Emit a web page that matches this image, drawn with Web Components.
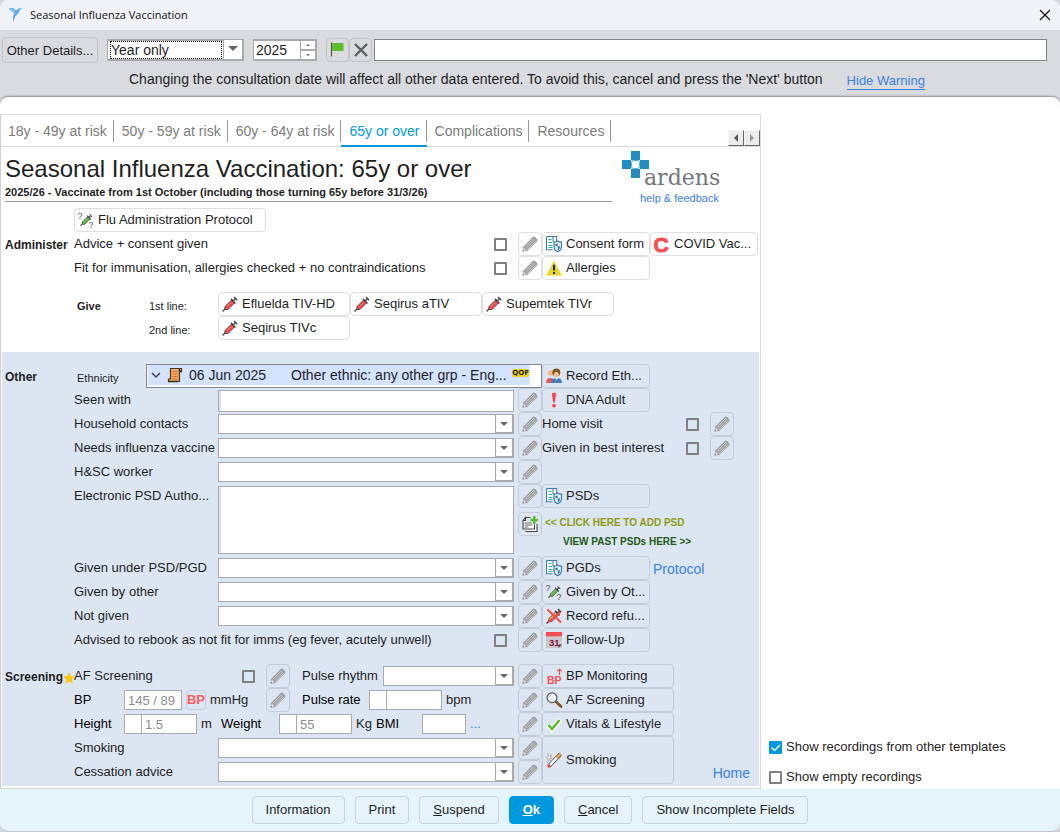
<!DOCTYPE html>
<html lang="en">
<head>
<meta charset="utf-8">
<title>Seasonal Influenza Vaccination</title>
<style>
  html { background: #d4d6da; }
  body {
    margin: 0; min-height: 100vh; display: flex; flex-direction: column;
    font: 13px/16px "Liberation Sans", Arial, sans-serif; color: #1e1e1e;
    --line: #dedfe2; --accent: #0099e0; --link: #3a82dc;
  }
  a { color: var(--link); text-decoration: none; }
  h2 { margin: 0; font-size: 12px; line-height: 27px; }
  h3 { margin: 0; font-size: 11px; line-height: 24px; padding-top: 3px; }
  .small { font-size: 11px; line-height: 24px; padding-top: 3px; }
  .strong { color: #000; }
  .pair { display: grid; grid-template-columns: 72px 1fr; padding-left: 3px; box-sizing: border-box; }
  .grow { flex: 1; }
  .w20 { width: 20px; }
  .w48 { width: 48px; }
  .w50 { width: 50px; }
  .w58 { width: 58px; }
  .w67 { width: 67px; }
  .w72 { width: 72px; }
  .w81 { width: 81px; }
  .w144 { width: 144px; }
  .w168 { width: 168px; }
  .note { font-size: 10px; font-weight: bold; line-height: 19px; }
  .add { color: #8f9a10; padding-left: 3px; margin-top: 5px; }
  .past { color: #1e5a14; padding-left: 21px; }
  .big { font-size: 14px; padding-left: 3px; line-height: 24px; padding-top: 2px; }
  .home { font-size: 14px; align-self: flex-end; margin-left: auto; padding-right: 9px; line-height: 22px; }
  .starred { display: flex; align-items: center; }
</style>
</head>
<body>
<title-bar>Seasonal Influenza Vaccination</title-bar>
<date-bar>Changing the consultation date will affect all other data entered. To avoid this, cancel and press the 'Next' button</date-bar>

<work-area>
  <template-panel>
    <tab-strip slot="tabs" labels="18y - 49y at risk|50y - 59y at risk|60y - 64y at risk|65y or over|Complications|Resources" current="3"></tab-strip>
    <template-header heading="Seasonal Influenza Vaccination: 65y or over">2025/26 - Vaccinate from 1st October (including those turning 65y before 31/3/26)</template-header>

    <form-section>
      <form-row>
        <action-button slot="wide" icon="protocol" size="large">Flu Administration Protocol</action-button>
      </form-row>
      <form-row>
        <h2 slot="heading">Administer</h2>
        <label slot="line" class="grow" for="advice">Advice + consent given</label>
        <tick-box slot="line" id="advice" label="Advice + consent given" spaced></tick-box>
        <edit-button slot="edit"></edit-button>
        <action-button slot="actions" icon="form">Consent form</action-button>
        <action-button slot="actions" icon="covid">COVID Vac...</action-button>
      </form-row>
      <form-row>
        <label slot="line" class="grow" for="fit">Fit for immunisation, allergies checked + no contraindications</label>
        <tick-box slot="line" id="fit" label="Fit for immunisation" spaced></tick-box>
        <edit-button slot="edit"></edit-button>
        <action-button slot="actions" icon="warning">Allergies</action-button>
      </form-row>
      <form-row gap>
        <div slot="wide" class="pair w144"><h3>Give</h3><span class="small">1st line:</span></div>
        <action-button slot="wide" icon="syringe" size="medium">Efluelda TIV-HD</action-button>
        <action-button slot="wide" icon="syringe" size="medium">Seqirus aTIV</action-button>
        <action-button slot="wide" icon="syringe" size="medium">Supemtek TIVr</action-button>
      </form-row>
      <form-row>
        <div slot="wide" class="pair w144"><span></span><span class="small">2nd line:</span></div>
        <action-button slot="wide" icon="syringe" size="medium">Seqirus TIVc</action-button>
      </form-row>
    </form-section>

    <form-section tinted>
      <form-row>
        <h2 slot="heading">Other</h2>
        <div slot="line" class="pair small"><span>Ethnicity</span></div>
        <record-line slot="record" date="06 Jun 2025">Other ethnic: any other grp - Eng...</record-line>
        <action-button slot="actions" icon="people">Record Eth...</action-button>
      </form-row>
      <form-row>
        <label slot="line" class="w144" for="seen">Seen with</label>
        <text-box slot="line" id="seen" label="Seen with" wide></text-box>
        <edit-button slot="edit"></edit-button>
        <action-button slot="actions" icon="alert">DNA Adult</action-button>
      </form-row>
      <form-row>
        <label slot="line" class="w144" for="contacts">Household contacts</label>
        <combo-box slot="line" id="contacts" label="Household contacts"></combo-box>
        <edit-button slot="edit"></edit-button>
        <label slot="actions" class="w144" for="visit">Home visit</label>
        <tick-box slot="actions" id="visit" label="Home visit" spaced></tick-box>
        <edit-button slot="actions"></edit-button>
      </form-row>
      <form-row>
        <label slot="line" class="w144" for="needs">Needs influenza vaccine</label>
        <combo-box slot="line" id="needs" label="Needs influenza vaccine"></combo-box>
        <edit-button slot="edit"></edit-button>
        <label slot="actions" class="w144" for="interest">Given in best interest</label>
        <tick-box slot="actions" id="interest" label="Given in best interest" spaced></tick-box>
        <edit-button slot="actions"></edit-button>
      </form-row>
      <form-row>
        <label slot="line" class="w144" for="worker">H&amp;SC worker</label>
        <combo-box slot="line" id="worker" label="H&amp;SC worker"></combo-box>
        <edit-button slot="edit"></edit-button>
      </form-row>
      <form-row tall>
        <label slot="line" class="w144" for="psd">Electronic PSD Autho...</label>
        <memo-box slot="line" id="psd" label="Electronic PSD Authorisation"></memo-box>
        <edit-button slot="edit"></edit-button>
        <edit-button slot="edit" icon="addnote" label="Add note"></edit-button>
        <action-button slot="actions" icon="form">PSDs</action-button>
        <span slot="actions" class="note add">&lt;&lt; CLICK HERE TO ADD PSD</span>
        <span slot="actions" class="note past">VIEW PAST PSDs HERE &gt;&gt;</span>
      </form-row>
      <form-row>
        <label slot="line" class="w144" for="under">Given under PSD/PGD</label>
        <combo-box slot="line" id="under" label="Given under PSD/PGD"></combo-box>
        <edit-button slot="edit"></edit-button>
        <action-button slot="actions" icon="form">PGDs</action-button>
        <a slot="actions" class="big" href="#protocol">Protocol</a>
      </form-row>
      <form-row>
        <label slot="line" class="w144" for="byother">Given by other</label>
        <combo-box slot="line" id="byother" label="Given by other"></combo-box>
        <edit-button slot="edit"></edit-button>
        <action-button slot="actions" icon="protocol">Given by Ot...</action-button>
      </form-row>
      <form-row>
        <label slot="line" class="w144" for="notgiven">Not given</label>
        <combo-box slot="line" id="notgiven" label="Not given"></combo-box>
        <edit-button slot="edit"></edit-button>
        <action-button slot="actions" icon="refused">Record refu...</action-button>
      </form-row>
      <form-row>
        <label slot="line" class="grow" for="rebook">Advised to rebook as not fit for imms (eg fever, acutely unwell)</label>
        <tick-box slot="line" id="rebook" label="Advised to rebook" spaced></tick-box>
        <edit-button slot="edit"></edit-button>
        <action-button slot="actions" icon="calendar">Follow-Up</action-button>
      </form-row>

      <form-row gap>
        <h2 slot="heading" class="starred">Screening<ui-icon name="star"></ui-icon></h2>
        <label slot="line" class="w168" for="af">AF Screening</label>
        <tick-box slot="line" id="af" label="AF Screening" spaced></tick-box>
        <edit-button slot="line" spaced></edit-button>
        <label slot="line" class="w81" for="rhythm">Pulse rhythm</label>
        <combo-box slot="line" id="rhythm" label="Pulse rhythm"></combo-box>
        <edit-button slot="edit"></edit-button>
        <action-button slot="actions" icon="bp" size="medium">BP Monitoring</action-button>
      </form-row>
      <form-row>
        <label slot="line" class="w50 strong" for="bp">BP</label>
        <text-box slot="line" id="bp" label="BP" value="145 / 89"></text-box>
        <bp-button slot="line"></bp-button>
        <span slot="line" class="grow">mmHg</span>
        <edit-button slot="line" spaced></edit-button>
        <label slot="line" class="w67 strong" for="rate">Pulse rate</label>
        <split-box slot="line" id="rate" label="Pulse rate"></split-box>
        <span slot="line" class="w72">bpm</span>
        <edit-button slot="edit"></edit-button>
        <action-button slot="actions" icon="search" size="medium">AF Screening</action-button>
      </form-row>
      <form-row>
        <label slot="line" class="w50 strong" for="height">Height</label>
        <split-box slot="line" id="height" label="Height" value="1.5"></split-box>
        <span slot="line" class="w20">m</span>
        <label slot="line" class="w58 strong" for="weight">Weight</label>
        <split-box slot="line" id="weight" label="Weight" value="55"></split-box>
        <span slot="line" class="w20">Kg</span>
        <label slot="line" class="grow strong" for="bmi">BMI</label>
        <text-box slot="line" id="bmi" label="BMI" narrow></text-box>
        <a slot="line" class="w48" href="#bmi">...</a>
        <edit-button slot="edit"></edit-button>
        <action-button slot="actions" icon="tick" size="medium">Vitals &amp; Lifestyle</action-button>
      </form-row>
      <form-row double>
        <label slot="line" class="w144" for="smoking">Smoking</label>
        <combo-box slot="line" id="smoking" label="Smoking"></combo-box>
        <label slot="line" class="w144" for="cessation">Cessation advice</label>
        <combo-box slot="line" id="cessation" label="Cessation advice"></combo-box>
        <edit-button slot="edit"></edit-button>
        <edit-button slot="edit"></edit-button>
        <action-button slot="actions" icon="cigarette" size="medium">Smoking</action-button>
        <a slot="actions" class="home" href="#home">Home</a>
      </form-row>
    </form-section>
  </template-panel>

  <display-options slot="side"></display-options>
</work-area>

<footer-bar></footer-bar>

<script>
const define = (name, markup, setup, field) => {
  const template = document.createElement('template');
  template.innerHTML = '<style>:host,*{box-sizing:border-box}</style>' + markup;
  customElements.define(name, class extends HTMLElement {
    static formAssociated = !!field;
    constructor() {
      super();
      this.attachShadow({ mode: 'open', delegatesFocus: !!field }).append(template.content.cloneNode(true));
    }
    connectedCallback() {
      const control = this.shadowRoot.querySelector('input,select,textarea');
      if (field && control) control.setAttribute('aria-label', this.getAttribute('label') || '');
      if (setup) setup(this, this.shadowRoot);
    }
  });
};

const syringe = fill => `
  <path d="M.5 15.5 4 12" stroke="#444" stroke-width="1.3" fill="none"/>
  <path d="M3 10.5 9.5 4l3 3L6 13.5 2.8 13.4z" fill="${fill}" stroke="#4a4a4a" stroke-width=".9"/>
  <path d="m9 2.8 4.5 4.6M11 5.2l2.6-2.7M12 1l3.2 3.2" stroke="#444" stroke-width="1.4" fill="none"/>
  <path d="m7.8 6.8 1 1M6.2 8.3l1 1M4.8 9.8l1 1" stroke="#fff" stroke-width=".6" opacity=".7"/>`;

const ICONS = {
  pencil: `<path d="M.6 15.4 1 10.9 10.6 1.2Q12 0 13.3 1.2L15 2.9Q16 4.2 14.9 5.5L5.2 15z" fill="#999"/>
    <path d="m2.6 11.5 9.3-9.3M3.9 12.6l9.3-9.3M5 13.9l9.2-9.2" stroke="#dfe3e8" stroke-width=".7"/>
    <path d="m1.8 11.8 2.4 2.4-2.2.5-.8-.7z" fill="#e8eaee"/><path d="m.6 15.4.3-1.7 1.4 1.4z" fill="#777"/>`,
  syringe: syringe('#f8474c'),
  protocol: `<g transform="translate(2 1.5) scale(.8)">${syringe('#5dbb35')}</g>
    <text x="-.5" y="7" font-size="9" fill="#555" font-family="Liberation Sans">?</text>
    <text x="10.5" y="15.5" font-size="9" fill="#555" font-family="Liberation Sans">?</text>`,
  refused: `${syringe('#f0b83c')}<path d="m1.5 1.5 13.5 13M14.5 4 2 14.5" stroke="#f8474c" stroke-width="2" fill="none"/>`,
  form: `<path d="M.6.6h10v5M.6.6v13h6" fill="none" stroke="#3b7bb0" stroke-width="1.2"/>
    <path d="M1.2 1.2h9v4H7v8H1.2z" fill="#fff"/>
    <path d="M2.5 3.5h3M2.5 6.5h3.5M2.5 9.5h4M2.5 11.5h4" stroke="#27a9b8"/><path d="M7 1v5" stroke="#3b7bb0"/>
    <path d="M8 6.2q2 0 3.5-1.2 1.5 1.2 4 1.2v4q0 4-4 5.4Q7.8 14 8 10z" fill="#eef4fb" stroke="#3b7bb0" stroke-width="1.2"/>
    <path d="M11.700 7v3.200H9.300V8Q11 7.800 11.700 7zM11.700 10.300h2.500q0 2.700-2.500 4z" fill="#3b7bb0"/>`,
  covid: `<text x="-.5" y="15.5" font-size="21" font-weight="bold" fill="#fb4d52" stroke="#fb4d52" font-family="Liberation Sans">C</text>`,
  warning: `<path d="M8 .5 15.8 15.5H.2z" fill="#e9d61f"/><path d="M8 4.8v5.800M8 12v2" stroke="#222" stroke-width="2"/>`,
  people: `<circle cx="4.500" cy="5" r="2.800" fill="#f2b888"/><path d="M0 15q0-5 4.500-5Q8 10 8 15z" fill="#f4535a"/>
    <circle cx="10.300" cy="4.500" r="4" fill="#80561f"/><circle cx="10.300" cy="6.400" r="2.500" fill="#f2c296"/><path d="M5 15q0-5 5.500-5t5.500 5z" fill="#3f7fb8"/>
    <path d="m8.800 10 1.700 1.800 1.700-1.800z" fill="#fff"/>`,
  alert: `<path d="M5.800 1.500Q8 .2 10.200 1.500L8.800 10.500H7.200z" fill="#fb4247"/><circle cx="8" cy="13.600" r="1.900" fill="#fb4247"/>`,
  calendar: `<path d="M0 0h16v16H0z" fill="#c9c9cc"/><path d="M0 0h16v4.300H0z" fill="#fb4d52"/><path d="M12.500 16v-3.500H16z" fill="#444"/>
    <text x="3" y="13.500" font-size="9.500" font-weight="bold" fill="#8b1240" font-family="Liberation Sans">31</text>`,
  bp: `<text x="1" y="16" font-size="10.500" font-weight="bold" fill="#fb4d52" font-family="Liberation Sans">BP</text>
    <path d="M13.500 7V1M11.200 3.300 13.500 1l2.300 2.300" fill="none" stroke="#e0565c" stroke-width="1.200"/>`,
  search: `<path d="m10 9.800 5 4.700" stroke="#86541f" stroke-width="2.800" stroke-linecap="round"/>
    <circle cx="6" cy="5.700" r="4.900" fill="#f2f6fb" stroke="#555" stroke-width="1.200"/><path d="M3 5.500Q3.200 3 5.800 2.700" fill="none" stroke="#b5c4d4"/>`,
  tick: `<path d="m2 9 4 4.500L14 3.500" fill="none" stroke="#fff" stroke-width="5"/><path d="m2.500 9 3.500 4 7.500-9" fill="none" stroke="#5cbb2c" stroke-width="2.600"/>`,
  cigarette: `<path d="m3 14 11.500-12" stroke="#555" stroke-width="4"/><path d="m3 14 8-8.400" stroke="#fff" stroke-width="2.500"/>
    <path d="m10.500 6 4-4.200" stroke="#eda84e" stroke-width="2.600"/><path d="m2 15 2-2.100" stroke="#f4474c" stroke-width="3.200"/>
    <path d="M1 11Q3 9 1.500 7T3 3.500Q1 2 2 .5M4.500 9.500Q6 7 4.800 5T5.500 2" fill="none" stroke="#8b8cab" stroke-width="1" stroke-dasharray="1.500 1"/>
    <path d="M3.500 8.500 4 6M5.500 5v-2" stroke="#f0b43c"/>`,
  addnote: `<path d="M3.500 1.500h5M15 8v7.500H3.500M12.500 8.500v4.500H1V4.500l2.500-3v3H1" fill="#fff" stroke="#444" stroke-width="1.100"/>
    <path d="M2.500 7h7M2.500 9h8M2.500 11h4" stroke="#555" stroke-width=".9"/><path d="M12.300 0v8M8.500 4H16" stroke="#55c02a" stroke-width="2.400"/>`,
  star: `<path d="m8 0 2.300 5.400 5.700.5-4.300 3.900 1.300 5.700L8 12.500 3 15.500l1.300-5.700L0 5.900l5.700-.5z" fill="#ffc800"/>`,
  flag: `<path d="M1.500 .5v14" stroke="#555" stroke-width="1.200"/><path d="M2 1h11.500v8H2z" fill="#5cbf2a"/>`,
  cross: `<path d="m2 2 12 12M14 2 2 14" stroke="#606060" stroke-width="2.400" fill="none"/>`,
  scroll: `<path d="M3.500 1.500h11V4h-2v10.500h-11V12h2z" fill="#f3ad5c" stroke="#4a3620" stroke-width="1.200"/>
    <path d="M5.500 4.500h5M5.500 7h5M5.500 9.500h5M5.500 12h5" stroke="#d9692a"/><path d="M12.500 2v2.500h2.500M1 14.500h10" stroke="#3c2c1c" stroke-width="1.400" fill="none"/>`
};

define('ui-icon', `
  <style>:host{display:block;width:16px;height:16px;flex:none}
  :host([name=star]){width:12px;height:12px} svg{display:block;width:100%;height:100%;overflow:visible}</style>
  <svg viewBox="0 0 16 16" aria-hidden="true"></svg>`,
  (host, root) => { root.querySelector('svg').innerHTML = ICONS[host.getAttribute('name')]; });

define('title-bar', `
  <style>:host{display:flex;align-items:center;height:30px;padding:0 9px 0 8px;background:#f0f2f8;border-radius:8px 8px 0 0;
    font:11px/16px "Open Sans","Noto Sans",sans-serif;color:#111}
  .mark{width:16px;height:16px;margin-right:6px} span{flex:1}
  button{border:0;background:none;padding:0;width:12px;height:12px} svg{display:block}</style>
  <svg class="mark" viewBox="0 0 16 16" aria-hidden="true"><path d="M.5 1.500 5 1l3 2.500L11 1.300l4 .2-3 1.200L10 6.500 6.800 10 5.500 15.500 4.800 10.500 6 6z" fill="#5ea9e6"/><path d="m.5 1.500 6 1.500 1 3.500-2-.5z" fill="#8cc4f2"/></svg>
  <span><slot></slot></span>
  <button aria-label="Close"><svg width="12" height="12" viewBox="0 0 12 12"><path d="m1 1 10 10M11 1 1 11" stroke="#111" stroke-width="1.200"/></svg></button>`);

define('combo-box', `
  <style>:host{display:block;position:relative;flex:1;height:20px;margin-right:4px}
  :host([dated]){height:22px;flex:none;width:137px;margin:0}
  select{appearance:none;display:block;width:100%;height:100%;border:1px solid #a9aab0;border-width:1px 2px 1px 1px;border-radius:0;background:#fff;
    padding:0 3px;font:14px "Liberation Sans",sans-serif;color:#1e1e1e;outline:0}
  :host([dated]) select{border-width:2px 2px 2px 1px}
  i{position:absolute;top:1px;right:2px;bottom:1px;width:17px;border:1px solid #a9aab0;border-width:0 0 1px 1px;pointer-events:none;background:#fff}
  i::after{content:"";position:absolute;left:4px;top:7px;border:4px solid transparent;border-top-color:#666;border-bottom:0}
  b{display:none;position:absolute;left:3px;top:2px;right:22px;bottom:2px;border:1px dotted #111;pointer-events:none}
  :host([dated]) b{display:block} :host([dated]) i{width:19px}
  :host([dated]) i::after{left:4px;top:6px;border-width:5px 5px 0}</style>
  <select></select><b></b><i></i>`,
  (host, root) => { root.querySelector('select').innerHTML = `<option>${host.getAttribute('value') || ''}</option>`; }, true);

define('date-bar', `
  <style>:host{display:block;padding:7px 13px 0 2px;height:67px;background:#dadbdf}
  .row{display:flex;align-items:center;height:26px}
  button{height:24px;border:1px solid #c2c3c8;border-radius:4px;background:none;padding:0;font:13px "Liberation Sans",sans-serif;color:#1e1e1e}
  .details{width:96px;height:26px;margin-right:9px}
  .year{position:relative;width:64px;margin:0 9px;height:22px}
  input{display:block;width:100%;height:22px;border:1px solid #82848c;border-radius:0;padding:0 2px;background:#fff;font:14px "Liberation Sans",sans-serif;color:#1e1e1e}
  .year input{border:2px solid #a9aab0;border-left-width:1px}
  .spin{position:absolute;right:2px;top:2px;bottom:2px;width:15px;border-left:1px solid #a9aab0;background:linear-gradient(#a9aab0,#a9aab0) 0 8px/100% 2px no-repeat #fff}
  .spin::before,.spin::after{content:"";position:absolute;left:5px;top:3px;border:2px solid transparent;border-bottom-color:#666;border-top:0}
  .spin::after{top:13px;border-top:2px solid #666;border-bottom:0}
  .icon{width:23px;display:grid;place-items:center}
  .comment{flex:1;margin-left:2px}
  .warn{display:flex;gap:24px;padding-left:127px;font-size:14px;line-height:32px;white-space:nowrap}
  a{font-size:13px;line-height:17px;height:18px;margin-top:9px;color:#3a82dc;text-decoration:none;border-bottom:1px solid}</style>
  <div class="row">
    <button class="details">Other Details...</button>
    <combo-box dated label="Date precision" value="Year only"></combo-box>
    <div class="year"><input aria-label="Year" value="2025"><span class="spin"></span></div>
    <button class="icon" aria-label="Flag"><ui-icon name="flag"></ui-icon></button>
    <button class="icon" aria-label="Clear"><ui-icon name="cross"></ui-icon></button>
    <div class="comment"><input aria-label="Comment"></div>
  </div>
  <div class="warn"><span><slot></slot></span><a href="#hide">Hide Warning</a></div>`);

define('work-area', `
  <style>:host{flex:1;display:grid;grid-template-columns:minmax(0,761px) minmax(0,1fr);background:#fff;
    border-radius:8px 8px 0 0;box-shadow:0 -1px 2px #8e9096,0 -8px 0 8px #dadbdf;padding-top:17px;clip-path:inset(-3px 0 0 0)}</style>
  <slot></slot><slot name="side"></slot>`);

define('template-panel', `
  <style>:host{display:block;border:1px solid #d9dade;border-left-color:#d0d1d8;padding-bottom:1px}</style>
  <slot name="tabs"></slot><slot></slot>`);

define('tab-strip', `
  <style>:host{display:flex;height:32px;border-bottom:1px solid #d9dade}
  nav{display:flex;flex:1;margin-left:-1px}
  a{display:flex;align-items:center;height:32px;color:#7b7b7b;text-decoration:none;font-size:14px;border-bottom:2px solid transparent;white-space:nowrap}
  a span{padding:0 6px 0 8px;line-height:22px;border-right:1px solid #999;margin-top:1px}
  a[aria-current]{color:var(--accent);border-color:var(--accent)}
  .scroll{display:flex;align-self:flex-end}
  button{width:16px;height:16px;padding:0;border:1px solid #f4f4f4;border-right:1px solid #666;border-bottom:1px solid #666;background:#ececec;display:grid;place-items:center}</style>
  <nav></nav>
  <div class="scroll">
    <button aria-label="Previous tabs"><svg width="6" height="8"><path d="M5 0v8L1 4z" fill="#555"/></svg></button>
    <button aria-label="Next tabs"><svg width="6" height="8"><path d="M1 0v8l4-4z" fill="#999"/></svg></button>
  </div>`,
  (host, root) => {
    root.querySelector('nav').innerHTML = host.getAttribute('labels').split('|').map((text, i) =>
      `<a href="#tab${i}"${i == host.getAttribute('current') ? ' aria-current="page"' : ''}><span>${text}</span></a>`).join('');
  });

define('template-header', `
  <style>:host{display:flex;height:61px;padding-left:4px}
  .text{flex:1}
  h1{margin:0;font-size:24px;line-height:28px;font-weight:normal;padding-top:8px;white-space:nowrap}
  p{margin:0;font-size:11px;font-weight:bold;line-height:18px;border-bottom:1px solid #999;white-space:nowrap}
  .brand{width:138px;margin-left:10px}
  .logo{display:flex;align-items:flex-end;height:42px;color:#74757c;font:22px/22px "DejaVu Serif",serif}
  .logo svg{margin:0 -6px 10px 0}
  a{display:block;font-size:11px;line-height:18px;color:#3a7ee4;text-decoration:none;padding-left:18px}</style>
  <div class="text"><h1></h1><p><slot></slot></p></div>
  <div class="brand">
    <div class="logo"><svg width="28" height="28" viewBox="0 0 28 28" aria-hidden="true">
      <path d="M9 0h9v9H9zM0 9h9v9H0zM18 9h9v9h-9zM9 18h9v9H9z" fill="#1f8cc4"/>
      <rect x="9.500" y="9.500" width="8" height="8" rx="2" fill="#fff" stroke="#58acd6"/></svg><span>ardens</span></div>
    <a href="#help">help &amp; feedback</a>
  </div>`,
  (host, root) => { root.querySelector('h1').textContent = host.getAttribute('heading'); });

define('form-section', `
  <style>:host{display:block;margin:0 1px;padding-bottom:12px}
  :host([tinted]){background:#dce6f2;padding:12px 0 2px;--line:#c3ccd9}</style>
  <slot></slot>`);

define('form-row', `
  <style>:host{display:grid;grid-template:100% / 72px minmax(0,1fr) 24px 217px;height:24px;white-space:nowrap}
  :host([gap]){margin-top:12px} :host([tall]){height:72px} :host([double]){height:48px}
  .heading{padding-left:3px} .line,.actions{display:flex;align-items:center;min-width:0}
  .wide{display:flex;align-items:center;grid-column:2/-1;grid-row:1}
  .line{grid-column:2;grid-row:1} .edit{grid-column:3;grid-row:1} .heading{grid-column:1;grid-row:1} .actions{grid-column:4;grid-row:1}
  .record{grid-column:2/4;grid-row:1;padding-left:72px}
  ::slotted([slot=line]),::slotted([slot=actions]){flex-shrink:0}
  :host([tall]) .line{align-items:flex-start} :host([tall]) ::slotted(label){line-height:24px}
  :host([tall]) .edit{display:grid;gap:4px;align-content:start}
  :host([tall]) .actions{flex-direction:column;align-items:flex-start}
  :host([double]) .line{display:grid;grid-template-columns:144px 1fr;grid-auto-rows:24px}
  :host([double]) .actions{align-items:stretch}</style>
  <div class="heading"><slot name="heading"></slot></div>
  <div class="line"><slot name="line"></slot></div>
  <div class="edit"><slot name="edit"></slot></div>
  <div class="actions"><slot name="actions"></slot></div>
  <div class="wide"><slot name="wide"></slot></div>
  <div class="record"><slot name="record"></slot></div>`,
  (host, root) => {
    for (const name of ['wide', 'record'])
      if (!host.querySelector(`[slot=${name}]`)) root.querySelector('.' + name).remove();
  });

define('action-button', `
  <style>:host{display:block;width:108px;min-height:24px;flex:none}
  :host([size=medium]){width:132px} :host([size=large]){width:192px}
  button{display:flex;align-items:center;gap:4px;width:100%;height:100%;min-height:24px;padding:0 0 0 3px;border:1px solid var(--line);border-radius:4px;
    background:none;font:13px/16px "Liberation Sans",sans-serif;color:#1e1e1e;white-space:nowrap}</style>
  <button><span><slot></slot></span></button>`,
  (host, root) => root.querySelector('button').insertAdjacentHTML('afterbegin', `<ui-icon name="${host.getAttribute('icon')}"></ui-icon>`));

define('edit-button', `
  <style>:host{display:block;width:24px;height:24px;flex:none} :host([spaced]){margin-right:12px}
  button{display:grid;place-items:center;width:100%;height:100%;padding:0;border:1px solid var(--line);border-radius:4px;background:none}</style>
  <button></button>`,
  (host, root) => {
    const button = root.querySelector('button');
    button.innerHTML = `<ui-icon name="${host.getAttribute('icon') || 'pencil'}"></ui-icon>`;
    button.setAttribute('aria-label', host.getAttribute('label') || 'Edit');
  });

define('bp-button', `
  <style>:host{display:block;margin:0 4px}
  button{display:block;width:20px;height:20px;padding:0;border:1px solid var(--line);border-radius:4px;background:none;color:#fb5a5f;font:bold 13px/18px "Liberation Sans",sans-serif}
  span{margin:0 -2px}</style>
  <button><span>BP</span></button>`);

define('tick-box', `
  <style>:host{display:block;width:13px;height:13px;flex:none} :host([spaced]){margin-right:11px}
  :host([spaced]){width:24px;margin-right:0}
  input{appearance:none;display:block;margin:0;width:13px;height:13px;border:2px solid #808080;border-radius:1px;background:transparent}
  input:checked{border:0;background:var(--accent) url('data:image/svg+xml,<svg xmlns="http://www.w3.org/2000/svg" viewBox="0 0 13 13"><path d="M2.500 6.500 5.500 9.500 11 4" fill="none" stroke="white" stroke-width="1.300"/></svg>')}</style>
  <input type="checkbox">`,
  (host, root) => { root.querySelector('input').checked = host.hasAttribute('checked'); }, true);

define('text-box', `
  <style>:host{display:block;width:58px;height:20px} :host([narrow]){width:44px;margin-right:4px} :host([wide]){width:auto;flex:1;height:22px;margin-right:4px;margin-top:2px}
  input{display:block;width:100%;height:100%;border:1px solid #a9aab0;border-radius:0;padding:0 3px;background:#fff;font:13px "Liberation Sans",sans-serif;color:#8c8c8c}
  :host([wide]) input{box-shadow:inset 2px 0 #dce6f2}</style>
  <input>`,
  (host, root) => { root.querySelector('input').value = host.getAttribute('value') || ''; }, true);

define('split-box', `
  <style>:host{display:flex;width:73px;height:20px;margin-right:4px}
  input{display:block;width:17px;height:100%;border:1px solid #a9aab0;border-right:0;border-radius:0;padding:0 3px;background:#fff;font:13px "Liberation Sans",sans-serif;color:#8c8c8c}
  input+input{flex:1;min-width:0;border-right:1px solid #a9aab0}</style>
  <input aria-label="Qualifier"><input class="amount" aria-label="Amount">`,
  (host, root) => { root.querySelector('.amount').value = host.getAttribute('value') || ''; }, true);

define('memo-box', `
  <style>:host{display:block;flex:1;height:68px;margin:2px 4px 0 0}
  textarea{display:block;width:100%;height:100%;resize:none;border:1px solid #a9aab0;border-radius:0;background:#fff;box-shadow:inset 2px 0 #dce6f2}</style>
  <textarea></textarea>`, null, true);

define('record-line', `
  <style>:host{display:flex;height:24px;border:1px solid #7f8794;background:#fff;font-size:14px}
  .item{flex:1;display:flex;align-items:center;height:20px;margin:0 11px 0 1px;background:#d3e2ff;padding-left:3px}
  .chevron{margin-right:6px} time{margin:0 25px 0 6px} .text{flex:1;line-height:20px}
  mark{background:#efd51c;color:#222;font:bold 7px/8px "DejaVu Sans",sans-serif;margin:0 1px 4px 0;border-radius:2px}</style>
  <div class="item"><svg class="chevron" width="10" height="8"><path d="m1 2 4 4 4-4" fill="none" stroke="#444" stroke-width="1.500"/></svg>
  <ui-icon name="scroll"></ui-icon><time></time><span class="text"><slot></slot></span><mark>QOF</mark></div>`,
  (host, root) => { root.querySelector('time').textContent = host.getAttribute('date'); });

define('display-options', `
  <style>:host{display:flex;flex-direction:column;justify-content:flex-end;gap:14px;padding:0 0 4px 8px}
  div{display:flex;align-items:center;gap:4px}</style>
  <div><tick-box id="others" label="Show recordings from other templates" checked></tick-box><label for="others">Show recordings from other templates</label></div>
  <div><tick-box id="empty" label="Show empty recordings"></tick-box><label for="empty">Show empty recordings</label></div>`);

define('footer-bar', `
  <style>:host{display:flex;justify-content:center;align-items:center;gap:10px;height:43px;background:#e5f3fb;border-bottom:1px solid #bfc5ca;border-radius:0 0 8px 8px}
  button{height:28px;padding:0 13px;border:1px solid #c5d3dc;border-radius:4px;background:none;font:13px/16px "Liberation Sans",sans-serif;color:#1e1e1e;white-space:nowrap}
  .main{background:var(--accent);border-color:var(--accent);color:#fff;font-weight:bold}</style>
  <button>Information</button><button>Print</button><button><u>S</u>uspend</button><button class="main"><u>O</u>k</button><button><u>C</u>ancel</button><button>Show Incomplete Fields</button>`);
</script>
</body>
</html>
